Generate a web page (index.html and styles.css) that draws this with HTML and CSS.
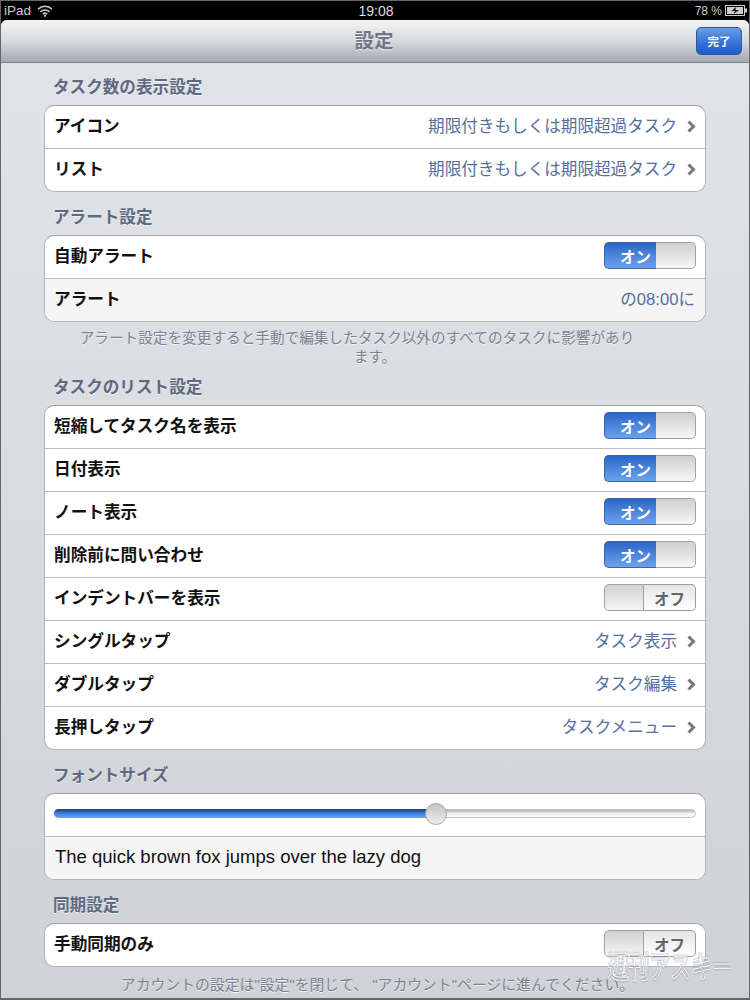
FILE: index.html
```html
<!DOCTYPE html>
<html lang="ja">
<head>
  <meta charset="UTF-8" />
  <title>設定</title>
  <link rel="stylesheet" href="styles.css">
</head>
<body>
  <div class="device">
    <div class="status-bar">
      <div class="status-left">
        <span>iPad</span>
        <svg class="wifi" width="16" height="12" viewBox="0 0 16 12">
          <path d="M1 4.2a10 10 0 0 1 14 0" />
          <path d="M3.4 6.8a6.6 6.6 0 0 1 9.2 0" />
          <path d="M5.8 9.2a3.2 3.2 0 0 1 4.4 0" />
          <circle cx="8" cy="10.8" r="1.1" />
        </svg>
      </div>
      <div class="status-time">19:08</div>
      <div class="status-right">
        <span>78 %</span>
        <svg class="battery" width="23" height="11" viewBox="0 0 23 11">
          <rect x="0.5" y="0.5" width="19" height="10" fill="none" stroke="#ccc" />
          <rect x="2" y="2" width="16" height="7" fill="#ccc" />
          <rect x="20" y="3.5" width="2" height="4" fill="#ccc" />
          <path d="M11 2 6.5 6h3.5L8.500 9 14 5h-3.500z" fill="#111" />
        </svg>
      </div>
    </div>

    <div class="app">
      <header class="nav">
        <div></div>
        <h1>設定</h1>
        <button class="done">完了</button>
      </header>

      <main class="content">
        <section class="section">
          <h2>タスク数の表示設定</h2>
          <div class="group">
            <div class="row"><span class="label">アイコン</span><span class="value">期限付きもしくは期限超過タスク</span><svg class="chevron" width="9" height="13" viewBox="0 0 9 13"><path d="M1.500 1.500 6.500 6.500 1.500 11.500" /></svg></div>
            <div class="row"><span class="label">リスト</span><span class="value">期限付きもしくは期限超過タスク</span><svg class="chevron" width="9" height="13" viewBox="0 0 9 13"><path d="M1.500 1.500 6.500 6.500 1.500 11.500" /></svg></div>
          </div>
        </section>

        <section class="section with-note">
          <h2>アラート設定</h2>
          <div class="group">
            <div class="row"><span class="label">自動アラート</span><div class="switch on"><span class="switch-text">オン</span><span class="knob"></span></div></div>
            <div class="row shaded"><span class="label">アラート</span><span class="value time">の08:00に</span></div>
          </div>
          <p class="note"><span class="note-first">アラート設定を変更すると手動で編集したタスク以外のすべてのタスクに影響があり</span>ます。</p>
        </section>

        <section class="section">
          <h2>タスクのリスト設定</h2>
          <div class="group">
            <div class="row"><span class="label">短縮してタスク名を表示</span><div class="switch on"><span class="switch-text">オン</span><span class="knob"></span></div></div>
            <div class="row"><span class="label">日付表示</span><div class="switch on"><span class="switch-text">オン</span><span class="knob"></span></div></div>
            <div class="row"><span class="label">ノート表示</span><div class="switch on"><span class="switch-text">オン</span><span class="knob"></span></div></div>
            <div class="row"><span class="label">削除前に問い合わせ</span><div class="switch on"><span class="switch-text">オン</span><span class="knob"></span></div></div>
            <div class="row"><span class="label">インデントバーを表示</span><div class="switch off"><span class="knob"></span><span class="switch-text">オフ</span></div></div>
            <div class="row"><span class="label">シングルタップ</span><span class="value">タスク表示</span><svg class="chevron" width="9" height="13" viewBox="0 0 9 13"><path d="M1.500 1.500 6.500 6.500 1.500 11.500" /></svg></div>
            <div class="row"><span class="label">ダブルタップ</span><span class="value">タスク編集</span><svg class="chevron" width="9" height="13" viewBox="0 0 9 13"><path d="M1.500 1.500 6.500 6.500 1.500 11.500" /></svg></div>
            <div class="row"><span class="label">長押しタップ</span><span class="value">タスクメニュー</span><svg class="chevron" width="9" height="13" viewBox="0 0 9 13"><path d="M1.500 1.500 6.500 6.500 1.500 11.500" /></svg></div>
          </div>
        </section>

        <section class="section">
          <h2>フォントサイズ</h2>
          <div class="group">
            <div class="row">
              <div class="slider">
                <div class="slider-fill"></div>
                <div class="slider-thumb"></div>
                <div class="slider-rest"></div>
              </div>
            </div>
            <div class="row shaded"><span class="sample">The quick brown fox jumps over the lazy dog</span></div>
          </div>
        </section>

        <section class="section">
          <h2>同期設定</h2>
          <div class="group">
            <div class="row"><span class="label">手動同期のみ</span><div class="switch off"><span class="knob"></span><span class="switch-text">オフ</span></div></div>
          </div>
          <p class="note note-sync">アカウントの設定は"設定"を閉じて、 "アカウント"ページに進んでください。</p>
        </section>
      </main>
    </div>

    <div class="watermark">週刊アスキー</div>
  </div>
</body>
</html>
```

FILE: styles.css
```css
* {
  margin: 0;
  padding: 0;
  box-sizing: border-box;
}

html, body {
  height: 1000px;
  overflow: hidden;
}

body {
  background-color: #000;
  font-family: "Liberation Sans", "Noto Sans CJK JP", sans-serif;
}

.device {
  position: relative;
  display: flex;
  flex-direction: column;
  height: 1000px;
  border: 1px solid #666;
  border-bottom-width: 2px;
  overflow: hidden;
}

.status-bar {
  display: grid;
  grid-template-columns: 1fr auto 1fr;
  align-items: center;
  height: 19px;
  padding: 0 1px 0 3px;
  color: #ccc;
  font-size: 13.500px;
}

.status-left {
  display: flex;
  align-items: center;
  gap: 6px;
}

.wifi path {
  fill: none;
  stroke: #ccc;
  stroke-width: 1.5;
}

.wifi circle {
  fill: #ccc;
}

.status-time {
  color: #ddd;
  font-size: 14px;
}

.status-right {
  display: flex;
  justify-content: flex-end;
  align-items: center;
  gap: 3px;
  font-size: 12px;
}

.app {
  flex: 1;
  min-height: 0;
  background: linear-gradient(#e1e4e9, #cfd2d7);
  border-radius: 6px 6px 0 0;
  overflow: hidden;
}

.nav {
  display: grid;
  grid-template-columns: 1fr auto 1fr;
  align-items: center;
  height: 43px;
  padding: 0 6px;
  background: linear-gradient(#f4f5f6, #d6d9de 50%, #a5a9b3);
  border-bottom: 1px solid #80848e;
}

.nav h1 {
  margin: 0 2px 4px 0;
  font-size: 19.500px;
  font-weight: bold;
  color: #6f7686;
  text-shadow: 0 1px 0 #f2f2f2;
}

.done {
  justify-self: end;
  width: 46px;
  height: 28px;
  margin-right: 1px;
  color: #fff;
  font-family: inherit;
  font-size: 11.500px;
  font-weight: bold;
  background: linear-gradient(#6a9fe8, #3a76dc 50%, #1f5bcb);
  border: 1px solid #35568f;
  border-radius: 5px;
}

.content {
  padding: 13px 43px 0;
}

.section {
  margin-bottom: 14px;
}

.with-note {
  margin-bottom: 9px;
}

.section h2 {
  height: 20px;
  margin: 0 0 9px 9px;
  font-size: 16.600px;
  line-height: 23px;
  font-weight: bold;
  color: #5f6a80;
  text-shadow: 0 1px 0 #eef0f2;
}

.group {
  background-color: #fff;
  border: 1px solid #b4b4b4;
  border-top-color: #a0a0a0;
  border-radius: 10px;
  overflow: hidden;
}

.row {
  display: flex;
  align-items: center;
  height: 42px;
  padding: 0 9px;
}

.row + .row {
  height: 43px;
  border-top: 1px solid #bdbdbd;
}

.shaded {
  background-color: #f5f5f5;
}

.label {
  flex: 1;
  margin-bottom: 5px;
  font-size: 16.650px;
  font-weight: bold;
  color: #111;
}

.value {
  margin-bottom: 5px;
  font-size: 16.600px;
  color: #56709c;
}

.time {
  margin-right: 1px;
}

.chevron {
  margin: 0 0 1px 10px;
  fill: none;
  stroke: #777;
  stroke-width: 3;
}

.sample {
  margin: 0 0 2px 1px;
  font-size: 18.500px;
  color: #111;
}

/* interruptores */
.switch {
  display: flex;
  width: 92px;
  height: 27px;
  margin-bottom: 3px;
  font-size: 15.500px;
  font-weight: bold;
}

.switch-text {
  display: flex;
  align-items: center;
  justify-content: center;
  flex: 1;
}

.knob {
  width: 40px;
  background: linear-gradient(#d0d0d0, #f6f6f6);
  border: 1px solid #a2a2a2;
}

.switch.on .knob {
  border-left: 0;
  border-radius: 0 5px 5px 0;
}

.switch.off .knob {
  border-radius: 5px 0 0 5px;
}

.switch.on .switch-text {
  padding-left: 10px;
  color: #fff;
  background: linear-gradient(#2a66c8, #6ca2ee);
  border: 1px solid #3a62a8;
  border-right: 0;
  border-radius: 5px 0 0 5px;
}

.switch.off .switch-text {
  color: #666;
  background: linear-gradient(#e4e4e4, #fff);
  border: 1px solid #9a9a9a;
  border-left: 0;
  border-radius: 0 5px 5px 0;
}

/* slider */
.slider {
  display: flex;
  align-items: center;
  flex: 1;
  margin-bottom: 3px;
}

.slider-fill {
  width: 382px;
  height: 9px;
  margin-right: -11px;
  background: linear-gradient(#123f80, #3a7ad8 45%, #6ea4ea);
  border-radius: 5px 0 0 5px;
}

.slider-thumb {
  position: relative;
  width: 22px;
  height: 22px;
  background: linear-gradient(#c4c4c4, #eeeeee);
  border: 1px solid #a8a8a8;
  border-radius: 50%;
}

.slider-rest {
  flex: 1;
  height: 9px;
  margin-left: -11px;
  background: linear-gradient(#b0b0b0, #f0f0f0 50%, #fafafa);
  border: 1px solid #c4c4c4;
  border-radius: 0 5px 5px 0;
}

.note {
  margin-top: 7px;
  font-size: 14.650px;
  line-height: 19px;
  text-align: center;
  color: #7c8290;
  text-shadow: 0 1px 0 #eef0f2;
}

.note-first {
  display: block;
  margin-right: 36px;
  white-space: nowrap;
}

.note-sync {
  margin-top: 9px;
  padding-left: 5px;
  font-size: 14.850px;
}

/* marca d'agua */
.watermark {
  position: absolute;
  right: 16px;
  bottom: 15px;
  font-size: 29px;
  line-height: 30px;
  font-weight: bold;
  color: transparent;
  -webkit-text-stroke: 1px #fff;
  filter: drop-shadow(0 0 1px rgba(100, 105, 115, 0.9));
  transform: scaleX(0.72);
  transform-origin: right center;
}
```
